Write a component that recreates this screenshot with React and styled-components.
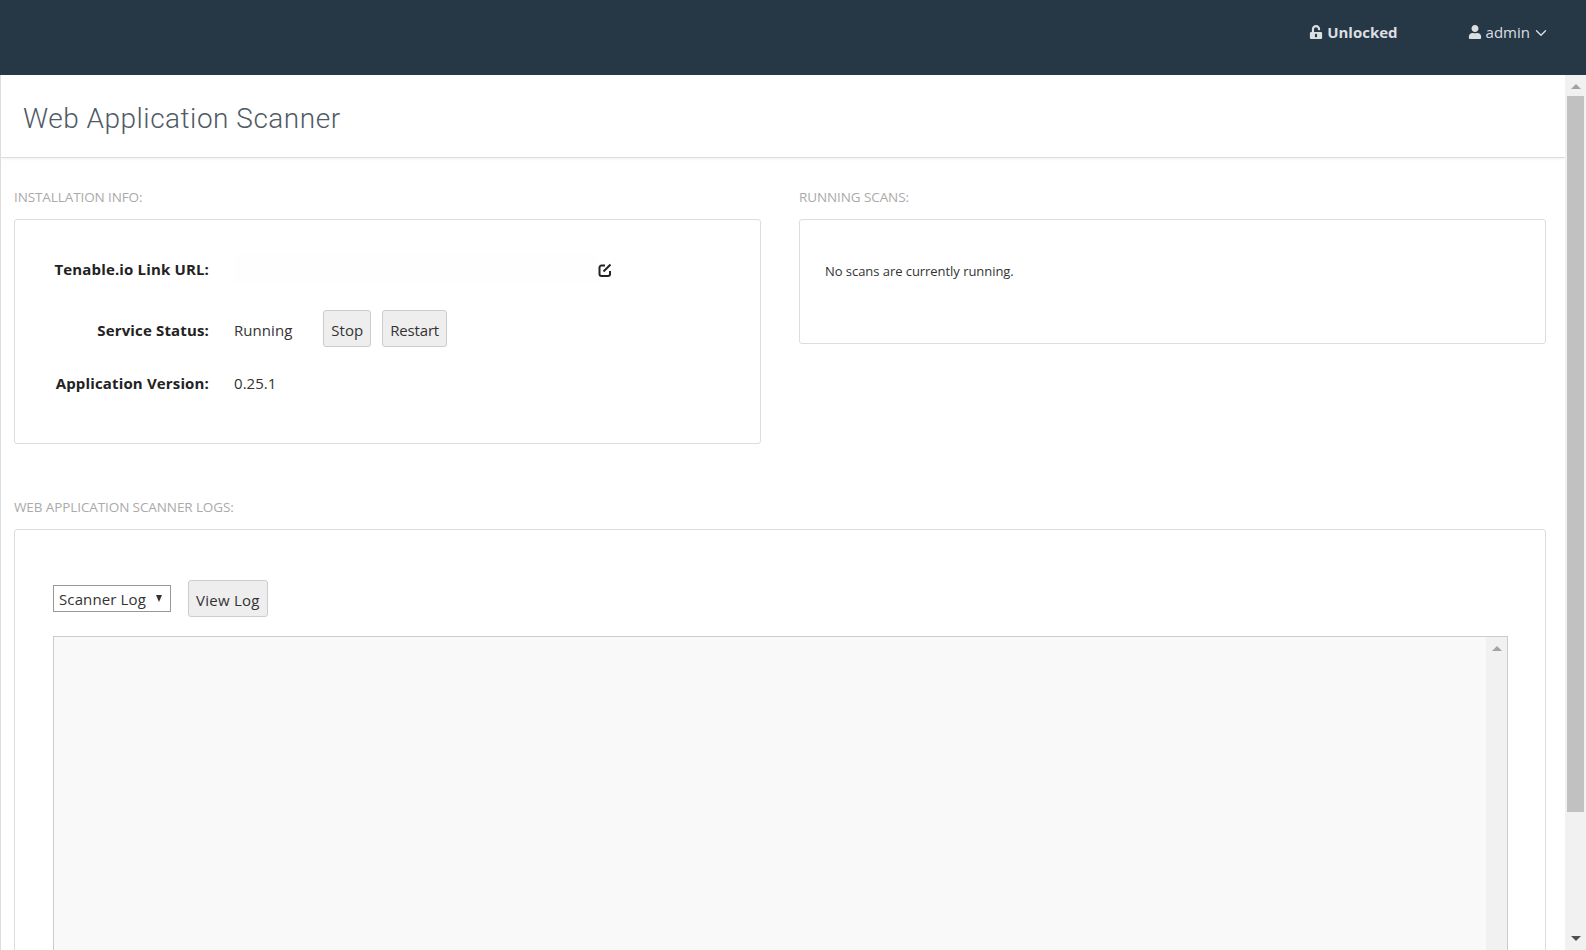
import React from "react";
import styled, { createGlobalStyle, css } from "styled-components";
import { FaUnlockAlt, FaUser } from "react-icons/fa";
import { ChevronDown } from "lucide-react";

const Global = createGlobalStyle`
  html, body { margin: 0; padding: 0; height: 100%; overflow: hidden; background: #fff; }
  body { font-family: "Open Sans", "Liberation Sans", sans-serif; color: #333; }
  * { box-sizing: border-box; }
`;

const Page = styled.div`
  height: 950px;
  display: flex;
  flex-direction: column;
  overflow: hidden;
`;

const TopBar = styled.header`
  height: 75px;
  flex: none;
  background: #263746;
  color: #dcdfe2;
  display: flex;
  justify-content: flex-end;
  padding: 22px 39px 0 0;
  font-size: 15px;
  line-height: 20px;
`;

const TopItem = styled.div`
  display: flex;
  align-items: center;
  height: 20px;
  gap: ${(p) => p.$gap || 4}px;
  font-weight: ${(p) => (p.$bold ? 700 : 400)};
  margin-left: ${(p) => p.$ml || 0}px;
`;

const MenuChevron = styled(ChevronDown)`
  margin: 2px -3px 0 -2px;
`;

const Body = styled.div`
  flex: 1;
  display: flex;
  min-height: 0;
`;

const Main = styled.main`
  flex: 1;
  min-width: 0;
  border-left: 1px solid #ddd;
  overflow: hidden;
`;

const TitleBar = styled.div`
  height: 83px;
  border-bottom: 1px solid #ddd;
  box-shadow: 0 1px 3px rgba(0, 0, 0, 0.06);
  padding: 26px 0 0 22px;
`;

const Title = styled.h1`
  margin: 0;
  font-family: "Roboto", "Open Sans", sans-serif;
  font-size: 28px;
  line-height: 36px;
  font-weight: 300;
  color: #515a65;
  letter-spacing: 0.5px;
`;

const Content = styled.div`
  padding: 30px 19px 0 13px;
`;

const Columns = styled.div`
  display: grid;
  grid-template-columns: 747px 747px;
  column-gap: 38px;
  align-items: start;
`;

const SectionLabel = styled.div`
  font-size: 13.5px;
  line-height: 18px;
  height: 18px;
  color: #aaa;
  margin: ${(p) => p.$mt || 0}px 0 13px;
  letter-spacing: -0.1px;
`;

const Panel = styled.section`
  border: 1px solid #ddd;
  border-radius: 3px;
  background: #fff;
  height: ${(p) => p.$h}px;
  padding: ${(p) => p.$pad || "0"};
`;

const Row = styled.div`
  display: flex;
  align-items: center;
  height: ${(p) => p.$h}px;
  margin-top: ${(p) => p.$mt || 0}px;
`;

const FieldLabel = styled.div`
  width: 194px;
  text-align: right;
  font-size: 15px;
  font-weight: 700;
  color: #222;
  margin-right: 25px;
  padding-top: ${(p) => p.$nudge || 0}px;
  letter-spacing: 0.15px;
  white-space: nowrap;
`;

const FieldValue = styled.div`
  font-size: 15px;
  color: #333;
  letter-spacing: 0.05px;
  padding-top: ${(p) => p.$nudge || 0}px;
  margin-right: ${(p) => p.$mr || 0}px;
`;

const Redacted = styled.div`
  width: 364px;
  height: 30px;
  background: #fefefe;
`;

const EditIcon = styled.svg`
  width: 14px;
  height: 14px;
  margin: 2px 0 0 0;
  fill: none;
  stroke: #222;
  stroke-width: 2;
`;

const Button = styled.button`
  height: 37px;
  padding: 2px 7px 0;
  background: #eee;
  border: 1px solid #ccc;
  border-radius: 3px;
  font: 400 15px "Open Sans", sans-serif;
  letter-spacing: ${(p) => p.$ls || 0}px;
  color: #333;
  margin-right: ${(p) => p.$mr || 0}px;
`;

const EmptyNote = styled.p`
  margin: 0;
  font-size: 13px;
  line-height: 18px;
  color: #333;
  letter-spacing: -0.05px;
`;

const LogToolbar = styled.div`
  display: flex;
  align-items: center;
  height: 37px;
  gap: 17px;
`;

const SelectBox = styled.div`
  width: 118px;
  height: 27px;
  border: 1px solid #999;
  background: #fff;
  display: flex;
  align-items: center;
  justify-content: space-between;
  padding: 0 8px 0 5px;
  font-size: 15px;
  color: #333;
  letter-spacing: 0.12px;
`;

const SelectCaret = styled.span`
  width: 0;
  height: 0;
  margin-bottom: 1px;
  border-left: 3.5px solid transparent;
  border-right: 3.5px solid transparent;
  border-top: 7px solid #333;
`;

const LogArea = styled.div`
  margin-top: 19px;
  width: 1455px;
  height: 400px;
  background: #f9f9f9;
  border: 1px solid #ccc;
  display: flex;
  justify-content: flex-end;
`;

const Track = styled.div`
  width: ${(p) => p.$w}px;
  flex: none;
  background: #f1f1f1;
  display: flex;
  flex-direction: column;
  align-items: center;
  position: relative;
`;

const Thumb = styled.div`
  width: 17px;
  height: 716px;
  margin-top: 21px;
  background: #c1c1c1;
`;

const Arrow = styled.span`
  position: absolute;
  left: 50%;
  transform: translateX(-50%);
  width: 0;
  height: 0;
  border-left: 5px solid transparent;
  border-right: 5px solid transparent;
  ${(p) =>
    p.$down
      ? css`
          bottom: 9px;
          border-top: 5px solid #505050;
        `
      : css`
          top: ${p.$top}px;
          border-bottom: 5px solid #a3a3a3;
        `}
`;

export default function App() {
  return (
    <Page>
      <Global />
      <TopBar>
        <TopItem $bold $gap={4}>
          <FaUnlockAlt size={14} />
          Unlocked
        </TopItem>
        <TopItem $ml={70}>
          <FaUser size={14} />
          admin
          <MenuChevron size={18} strokeWidth={1.8} />
        </TopItem>
      </TopBar>
      <Body>
        <Main>
          <TitleBar>
            <Title>Web Application Scanner</Title>
          </TitleBar>
          <Content>
            <Columns>
              <div>
                <SectionLabel>INSTALLATION INFO:</SectionLabel>
                <Panel $h={225} $pad="34px 0 0 0">
                  <Row $h={30}>
                    <FieldLabel>Tenable.io Link URL:</FieldLabel>
                    <Redacted />
                    <EditIcon viewBox="0 0 14 14">
                      <path d="M7 2.5H3.5a2 2 0 0 0-2 2v6.5a2 2 0 0 0 2 2h6.5a2 2 0 0 0 2-2V8" />
                      <path d="M5.5 8.5L12.5 1.5" />
                    </EditIcon>
                  </Row>
                  <Row $h={37} $mt={26}>
                    <FieldLabel $nudge={2}>Service Status:</FieldLabel>
                    <FieldValue $nudge={2} $mr={31}>Running</FieldValue>
                    <Button $mr={11}>Stop</Button>
                    <Button $ls={-0.15}>Restart</Button>
                  </Row>
                  <Row $h={30} $mt={21}>
                    <FieldLabel>Application Version:</FieldLabel>
                    <FieldValue>0.25.1</FieldValue>
                  </Row>
                </Panel>
              </div>
              <div>
                <SectionLabel>RUNNING SCANS:</SectionLabel>
                <Panel $h={125} $pad="42px 0 0 25px">
                  <EmptyNote>No scans are currently running.</EmptyNote>
                </Panel>
              </div>
            </Columns>
            <SectionLabel $mt={54}>WEB APPLICATION SCANNER LOGS:</SectionLabel>
            <Panel $h={500} $pad="50px 0 0 38px">
              <LogToolbar>
                <SelectBox>
                  Scanner Log
                  <SelectCaret />
                </SelectBox>
                <Button $ls={0.25}>View Log</Button>
              </LogToolbar>
              <LogArea>
                <Track $w={21}>
                  <Arrow $top={9} />
                </Track>
              </LogArea>
            </Panel>
          </Content>
        </Main>
        <Track $w={21}>
          <Arrow $top={9} />
          <Thumb />
          <Arrow $down />
        </Track>
      </Body>
    </Page>
  );
}
